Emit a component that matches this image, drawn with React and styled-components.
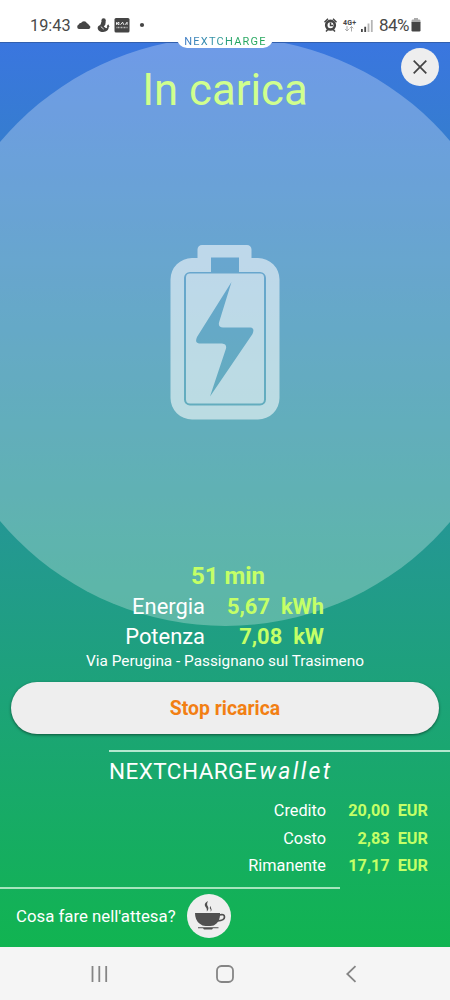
import React from "react";
import styled, { createGlobalStyle } from "styled-components";

const details = [
  { label: "Energia", value: "5,67", unit: "kWh" },
  { label: "Potenza", value: "7,08", unit: "kW" },
];

const wallet = [
  { label: "Credito", value: "20,00" },
  { label: "Costo", value: "2,83" },
  { label: "Rimanente", value: "17,17" },
];

function StatusBar() {
  return (
    <StatusWrapper>
      <StatusGroup>
        <Clock>19:43</Clock>
        <svg width="68" height="16" viewBox="0 0 68 16" fill="#454545">
          <path d="M3 12a2.300 2.300 0 0 1-.3-4.400 2 2 0 0 1 2.300-1.500A3.400 3.400 0 0 1 11 6.200a2.800 2.800 0 0 1 2 2A2 2 0 0 1 13 12z" />
          <circle cx="27.600" cy="3.400" r="2.200" />
          <path d="M25.400 4.500h4.300l-.4 3.300-1.500 1.800 2.300 1.700c.8-.1 1.200-.8 1.100-1.700l-.6-.4 1.700-2 1.300 2.700-.8-.1c0 3-2.100 5.200-5.700 5.200-3.500 0-5.700-2-5.400-4.600 0-1.500 2-1.800 3-3.200z" />
          <path d="m24.800 9.600 2.900 2.500" stroke="#fff" strokeWidth=".8" />
          <rect x="38.500" y="1" width="15" height="14.500" rx="1.500" />
          <path d="M40.500 7.800V5.200m0 1.500L43 5.200m-2 1.300 1.900 1.300V5.200M44.500 7.800 46.600 5.200l1.200 2.600m1.300 0 2-2.600v2.600" fill="none" stroke="#fff" strokeWidth=".9" />
          <path d="M40.500 10.500h11" stroke="#bbb" strokeWidth="1.500" strokeDasharray="1 .5" />
          <circle cx="66" cy="8" r="2.100" />
        </svg>
      </StatusGroup>
      <StatusGroup>
        <svg width="50" height="16" viewBox="0 0 50 16" fill="#454545">
          <circle cx="5.500" cy="8.200" r="4.300" fill="none" stroke="#454545" strokeWidth="2.600" />
          <path d="M-.5 5.200 3 1.800M11.500 5.200 8 1.800M1 14.500l1.800-2M10 14.500l-1.800-2M5.500 5.400v3.200H8" fill="none" stroke="#454545" strokeWidth="1.500" />
          <text x="18" y="7.500" fontFamily="Roboto" fontWeight="700" fontSize="7" textLength="13">4G+</text>
          <path d="M22 9v5m-1.800-1.800L22 14l1.800-1.800M26.500 14.500v-5m-1.800 1.800 1.800-1.800 1.800 1.800" fill="none" stroke="#aaa" strokeWidth="1" />
          <path d="M36 12h1.800v3H36zM39.300 9.700h1.800V15h-1.800z" />
          <path d="M42.600 6.500h1.800V15h-1.800zM45.900 3h1.800v12h-1.800z" fill="#b5b5b5" />
        </svg>
        <Percent>84%</Percent>
        <svg width="10" height="14" viewBox="0 0 10 14">
          <path d="M3 0h4v1.500h1.500Q9.500 1.500 9.500 3v1.500h-9V3Q.5 1.500 1.500 1.500H3z" fill="#aaa" />
          <path d="M.5 4h9v8.300q0 1.200-1.200 1.200H1.700Q.5 13.500.5 12.300z" fill="#454545" />
        </svg>
      </StatusGroup>
    </StatusWrapper>
  );
}

function Battery() {
  return (
    <BatteryIcon viewBox="0 0 110 175">
      <path
        fillRule="evenodd"
        d="M32 0h45a4.500 4.500 0 0 1 4.500 4.500V13H88a21.500 21.500 0 0 1 21.500 21.500V153A21.500 21.500 0 0 1 88 174.500H22A21.500 21.500 0 0 1 .5 153V34.500A21.500 21.500 0 0 1 22 13h5.500V4.500A4.500 4.500 0 0 1 32 0zM41 12.500V27H20a6 6 0 0 0-6 6V154.500a6 6 0 0 0 6 6H90a6 6 0 0 0 6-6V33a6 6 0 0 0-6-6H69V12.500z"
      />
      <path
        fillRule="evenodd"
        d="M20 28.500H90a4 4 0 0 1 4 4V154.500a4 4 0 0 1-4 4H20a4 4 0 0 1-4-4V32.500a4 4 0 0 1 4-4zM61.500 37 27 92q-2.500 6 2 6.500H52q5 .5 4 5L40 151.500 82.500 89q2.500-6-2-6.500H53q-5-.5-4-5z"
      />
    </BatteryIcon>
  );
}

function Cup() {
  return (
    <svg width="32" height="32" viewBox="0 0 32 32" fill="#505050">
      <path d="M2 13h25v2q0 5-3.500 8.500-2.500 2.500-6 2.500h-5q-3 0-6-2.500Q2 20 2 13z" />
      <path d="M26 15q5.500-1.500 5.500 2t-7 4" fill="none" stroke="#505050" strokeWidth="1.700" />
      <path d="M5 27.300h20.500v1H20l-1 1.200h-8l-1-1.200H5z" />
      <path d="M15 1c-3.500 2-4 4-2 6.500.8 1.200 1 2 .8 4 3-3 1-4.800.4-6.500-.3-1.300.2-2.500.8-4zM18 6c-1.600 1.500-1.600 2.200-.3 3.500v2.300c1.300-2 1-2.800.2-3.800z" />
    </svg>
  );
}

function App() {
  return (
    <>
      <GlobalStyle />
      <Screen>
        <StatusBar />
        <Main>
          <CircleClip>
            <Circle />
          </CircleClip>
          <Brand>
            <span>NEXTCHARGE</span>
          </Brand>
          <CloseButton aria-label="Chiudi">
            <svg width="14" height="14" viewBox="0 0 14 14">
              <path d="m.7.7 12.600 12.600M13.300.7.7 13.300" stroke="#444" strokeWidth="1.700" />
            </svg>
          </CloseButton>
          <Title>In carica</Title>
          <Battery />
          <Time>51 min</Time>
          {details.map((item) => (
            <DetailRow key={item.label}>
              <span>{item.label}</span>
              <strong>{item.value}&nbsp; {item.unit}</strong>
            </DetailRow>
          ))}
          <Address>Via Perugina - Passignano sul Trasimeno</Address>
          <StopButton>Stop ricarica</StopButton>
          <WalletHeader>
            <span>NEXTCHARGE</span>
            <em>wallet</em>
          </WalletHeader>
          <WalletTable>
            {wallet.map((item) => (
              <WalletRow key={item.label}>
                <span>{item.label}</span>
                <strong>{item.value}&nbsp; EUR</strong>
              </WalletRow>
            ))}
          </WalletTable>
          <Waiting>
            <span>Cosa fare nell'attesa?</span>
            <CupButton aria-label="Cosa fare">
              <Cup />
            </CupButton>
          </Waiting>
        </Main>
        <NavBar>
          <svg width="18" height="18" viewBox="0 0 18 18">
            <path d="M2.500 1v16M9.300 1v16M16.200 1v16" stroke="#858585" strokeWidth="1.800" />
          </svg>
          <svg width="18" height="18" viewBox="0 0 18 18">
            <rect x="1" y="1" width="16" height="16" rx="4.500" fill="none" stroke="#858585" strokeWidth="1.800" />
          </svg>
          <svg width="18" height="18" viewBox="0 0 18 18">
            <path d="M13.500 1.200 5.300 9l8.200 7.800" fill="none" stroke="#858585" strokeWidth="1.800" />
          </svg>
        </NavBar>
      </Screen>
    </>
  );
}

const GlobalStyle = createGlobalStyle`
  * {
    box-sizing: border-box;
  }
  body {
    margin: 0;
    font-family: Roboto, sans-serif;
  }
  button {
    font-family: inherit;
    border: none;
    padding: 0;
  }
  svg {
    display: block;
    flex-shrink: 0;
    overflow: visible;
  }
`;
const Screen = styled.div`
  width: 450px;
  height: 1000px;
  display: flex;
  flex-direction: column;
  overflow: hidden;
`;
const StatusWrapper = styled.header`
  height: 42px;
  padding: 8px 29px 0 30px;
  display: flex;
  justify-content: space-between;
  align-items: center;
  background: #fff;
  color: #484848;
`;
const StatusGroup = styled.div`
  display: flex;
  align-items: center;
`;
const Clock = styled.span`
  width: 46px;
  font-size: 16.3px;
  white-space: nowrap;
`;
const Percent = styled.span`
  width: 32px;
  margin-left: 4px;
  font-size: 17px;
  letter-spacing: -0.5px;
`;
const Main = styled.main`
  position: relative;
  height: 905px;
  display: flex;
  flex-direction: column;
  align-items: center;
  color: #fff;
  background: linear-gradient(#3a76df, #11b451);
  border-top: 1px solid #315fae;
  > * {
    position: relative;
    flex-shrink: 0;
  }
`;
const CircleClip = styled.div`
  && {
    position: absolute;
  }
  inset: 0;
  overflow: hidden;
`;
const Circle = styled.div`
  position: absolute;
  top: -6px;
  left: -69.5px;
  width: 589px;
  height: 589px;
  border-radius: 50%;
  background: rgba(255, 255, 255, 0.27);
`;
const Brand = styled.div`
  && {
    position: absolute;
  }
  top: -9px;
  left: 177px;
  width: 96px;
  height: 14px;
  border-radius: 0 0 10px 10px;
  background: #fff;
  text-align: center;
  font-size: 11px;
  line-height: 15px;
  letter-spacing: 1.25px;
  span {
    margin-right: -1px;
    color: transparent;
    background: linear-gradient(90deg, #3a78c4, #2d93a0 40%, #22a560 60%, #20a558);
    background-clip: text;
    -webkit-background-clip: text;
  }
`;
const CloseButton = styled.button`
  && {
    position: absolute;
  }
  top: 5px;
  right: 11px;
  width: 38px;
  height: 38px;
  display: grid;
  place-items: center;
  border-radius: 50%;
  background: #eee;
`;
const Title = styled.h1`
  height: 56px;
  margin: 19px 0 0;
  color: #d0ff8e;
  font-size: 43.7px;
  font-weight: 400;
  line-height: 56px;
`;
const BatteryIcon = styled.svg`
  width: 110px;
  height: 175px;
  margin-top: 127px;
  fill: rgba(255, 255, 255, 0.57);
`;
const Time = styled.div`
  height: 31px;
  margin: 141px 0 0 6px;
  color: #c4ff67;
  font-size: 24px;
  font-weight: 700;
  line-height: 31px;
`;
const DetailRow = styled.div`
  width: 324px;
  height: 29.5px;
  display: flex;
  align-self: flex-start;
  justify-content: flex-end;
  font-size: 21.9px;
  line-height: 29px;
  strong {
    width: 119px;
    text-align: right;
    color: #c4ff67;
  }
`;
const Address = styled.div`
  height: 20px;
  font-size: 15.35px;
  line-height: 20px;
`;
const StopButton = styled.button`
  width: 428px;
  height: 52px;
  margin-top: 11px;
  border-radius: 26px;
  background: #eee;
  color: #f27f13;
  font-size: 19.4px;
  font-weight: 700;
  box-shadow: 0 1px 3px rgba(0, 0, 0, 0.5);
`;
const WalletHeader = styled.div`
  width: 341px;
  height: 36px;
  margin-top: 16px;
  align-self: flex-end;
  border-top: 2px solid #b5e8cf;
  display: flex;
  font-size: 22.5px;
  line-height: 39px;
  letter-spacing: 0.45px;
  em {
    margin-left: 2px;
    font-size: 23px;
    font-weight: 400;
    letter-spacing: 2.4px;
  }
`;
const WalletTable = styled.div`
  width: 100%;
  padding: 11px 22px 0 0;
`;
const WalletRow = styled.div`
  height: 27.5px;
  display: flex;
  justify-content: flex-end;
  font-size: 16.3px;
  line-height: 27px;
  strong {
    width: 102px;
    text-align: right;
    color: #c4ff67;
  }
`;
const Waiting = styled.div`
  width: 340px;
  height: 60px;
  margin-top: 7px;
  padding: 0 0 4px 16px;
  display: flex;
  align-self: flex-start;
  align-items: center;
  gap: 11px;
  border-top: 2px solid #a5e6bd;
  font-size: 16.8px;
`;
const CupButton = styled.button`
  width: 44px;
  height: 44px;
  display: grid;
  place-items: center;
  border-radius: 50%;
  background: #eee;
`;
const NavBar = styled.nav`
  height: 53px;
  padding: 0 90px;
  display: flex;
  justify-content: space-between;
  align-items: center;
  background: #f5f5f5;
`;

export default App;
